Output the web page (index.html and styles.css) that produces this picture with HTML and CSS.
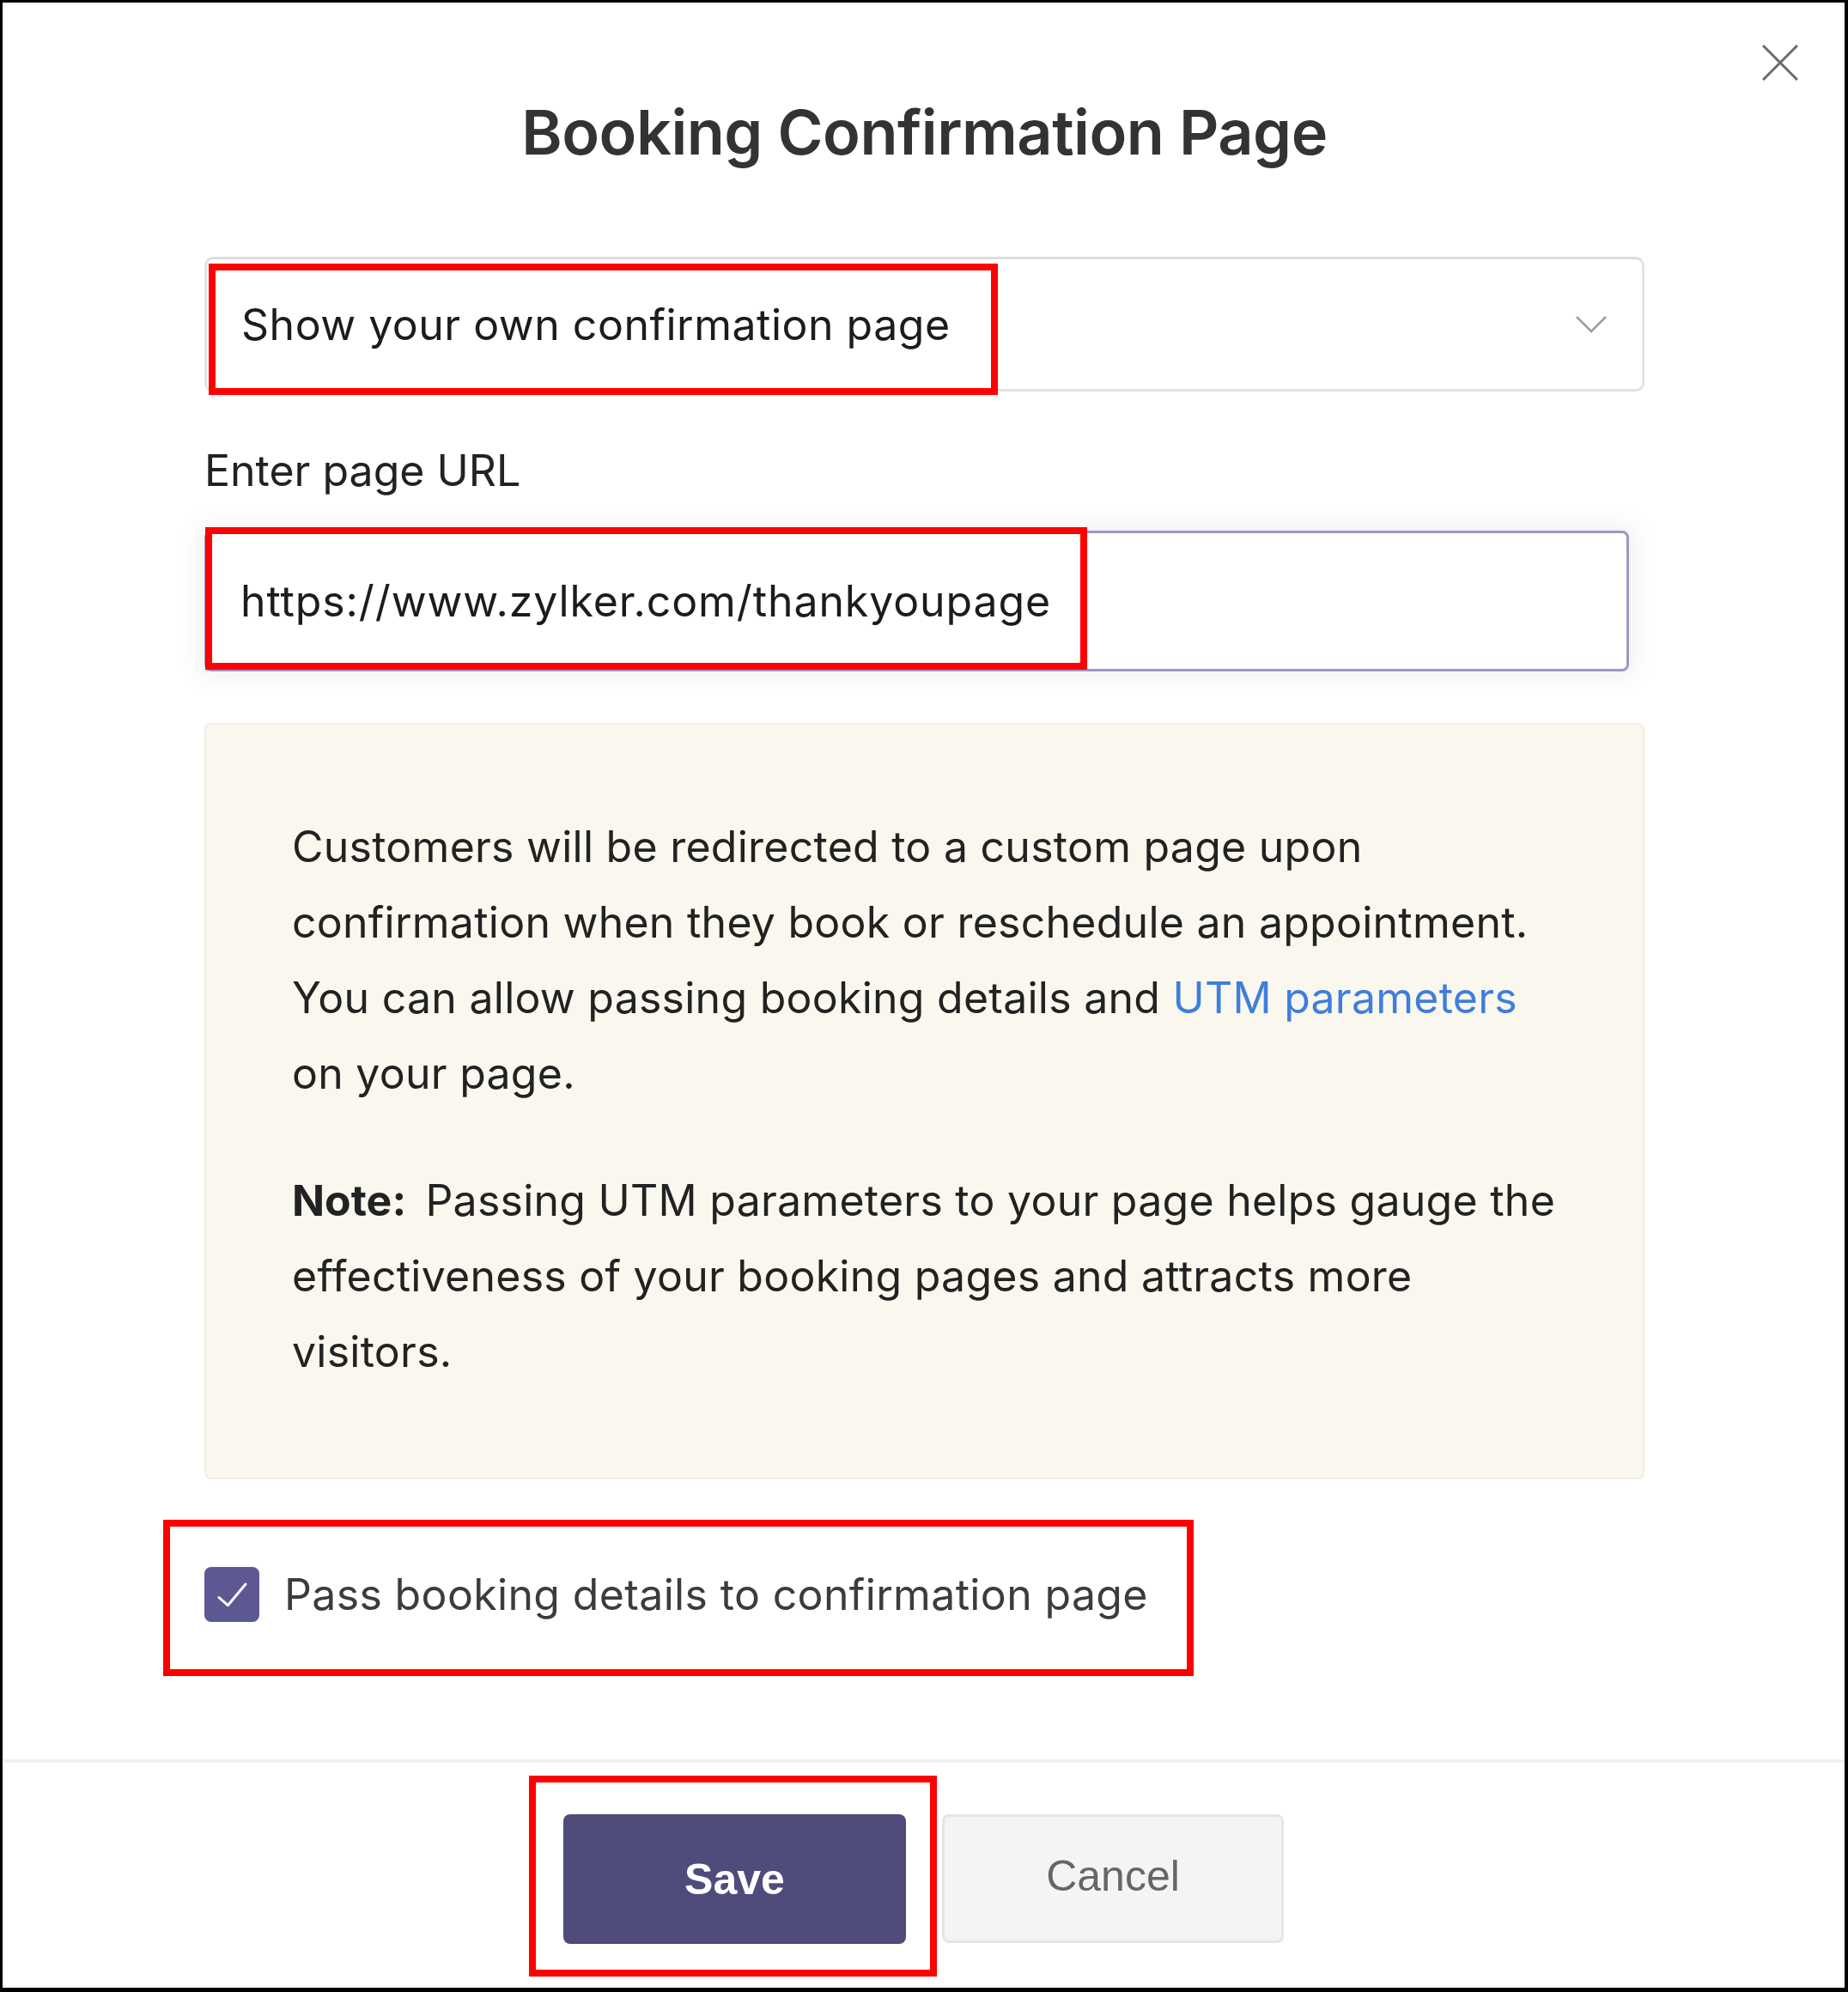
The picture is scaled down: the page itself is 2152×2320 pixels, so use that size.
FILE: index.html
```html
<!DOCTYPE html>
<html lang="en">
<head>
<meta charset="utf-8">
<title>Booking Confirmation Page</title>
<link rel="stylesheet" href="styles.css">
</head>
<body>
<div class="dialog">
  <button class="close" aria-label="Close">
    <svg width="42" height="42" viewBox="0 0 42 42"><path d="M1 1L41 41M41 1L1 41" stroke="#6b6b6b" stroke-width="3" fill="none"/></svg>
  </button>
  <div class="content">
    <h1 class="title">Booking Confirmation Page</h1>
    <div class="select">
      <span>Show your own confirmation page</span>
      <svg class="chev" width="36" height="20" viewBox="0 0 36 20"><path d="M1 1L18 18L35 1" stroke="#9c9c9c" stroke-width="2.5" fill="none"/></svg>
    </div>
    <div class="label">Enter page URL</div>
    <div class="input">https://www.zylker.com/thankyoupage</div>
    <div class="info">
      <p>Customers will be redirected to a custom page upon<br>confirmation when they book or reschedule an appointment.<br>You can allow passing booking details and <a class="link" href="#">UTM parameters</a><br>on your page.</p>
      <p><b class="note">Note:</b> Passing UTM parameters to your page helps gauge the<br>effectiveness of your booking pages and attracts more<br>visitors.</p>
    </div>
    <div class="check-row">
      <span class="checkbox">
        <svg width="64" height="64" viewBox="0 0 64 64"><path d="M17 35.5L27.3 44.7L48 20" stroke="#ffffff" stroke-width="3" fill="none" stroke-linecap="round" stroke-linejoin="round"/></svg>
      </span>
      <span class="check-label">Pass booking details to confirmation page</span>
    </div>
  </div>
  <div class="footer">
    <button class="btn btn-save">Save</button>
    <button class="btn btn-cancel">Cancel</button>
  </div>
  <div class="mark mark-select"></div>
  <div class="mark mark-url"></div>
  <div class="mark mark-check"></div>
  <div class="mark mark-save"></div>
</div>
</body>
</html>
```

FILE: styles.css
```css
html {
  background: #000000;
}
body {
  margin: 0;
  background: #000000;
  font-family: "Inter", "Lato", "Liberation Sans", sans-serif;
}
.dialog {
  position: relative;
  margin: 3px 4px 0 3px;
  height: 2312px;
  background: #ffffff;
  box-sizing: border-box;
  display: flex;
  flex-direction: column;
}
.close {
  position: absolute;
  top: 49px;
  right: 54px;
  padding: 0;
  border: 0;
  background: transparent;
  width: 42px;
  height: 42px;
  display: block;
}
.close svg {
  display: block;
}
.content {
  padding: 108px 233px 0 235px;
}
.title {
  margin: 0;
  font-size: 72px;
  line-height: 86px;
  font-weight: 600;
  color: #333333;
  text-align: center;
  letter-spacing: -0.5px;
}
.select {
  margin-top: 102px;
  height: 157px;
  box-sizing: border-box;
  border: 3px solid #e3e3e3;
  border-top-color: #dcdcdc;
  border-radius: 10px;
  padding: 0 41px 0 40px;
  display: flex;
  align-items: center;
  justify-content: space-between;
  font-size: 50px;
  line-height: 60px;
  color: #1c1c1c;
  letter-spacing: 0.5px;
}
.chev {
  display: block;
}
.label {
  margin-top: 62px;
  font-size: 50px;
  line-height: 60px;
  color: #222222;
}
.input {
  margin-top: 40px;
  width: 1659px;
  height: 164px;
  box-sizing: border-box;
  border: 3px solid #9a98c6;
  border-radius: 8px;
  padding-left: 39px;
  display: flex;
  align-items: center;
  font-size: 50px;
  line-height: 60px;
  color: #1c1c1c;
  letter-spacing: 0.9px;
  box-shadow: 0 0 26px 6px rgba(110, 110, 160, 0.10);
}
.info {
  margin-top: 60px;
  border: 2px solid #f1eedf;
  background: #faf8ee;
  border-radius: 8px;
  padding: 98px 60px 103px 100px;
  font-size: 50px;
  line-height: 88px;
  color: #222222;
  white-space: nowrap;
  letter-spacing: 0.25px;
}
.info p {
  margin: 0;
}
.info p + p {
  margin-top: 60px;
}
.note {
  font-weight: 700;
  margin-right: 8px;
  letter-spacing: 0;
}
.link {
  color: #3f7ddf;
  text-decoration: none;
}
.check-row {
  margin-top: 102px;
  display: flex;
  align-items: center;
  gap: 29px;
}
.checkbox {
  width: 64px;
  height: 64px;
  border-radius: 8px;
  background: #5c5992;
  display: block;
  flex: none;
}
.checkbox svg {
  display: block;
}
.check-label {
  font-size: 50px;
  line-height: 60px;
  color: #3c3c3c;
  letter-spacing: 0.35px;
}
.footer {
  margin-top: 160px;
  border-top: 4px solid #efefef;
  padding-top: 60px;
  display: flex;
  justify-content: center;
  align-items: flex-start;
  gap: 42px;
}
.btn {
  font-family: "Liberation Sans", Arial, sans-serif;
  font-size: 50px;
  line-height: 60px;
  border-radius: 8px;
  padding: 0;
  box-sizing: border-box;
  cursor: pointer;
}
.btn-save {
  width: 399px;
  height: 151px;
  border: 0;
  background: #4f4b7b;
  color: #ffffff;
  font-weight: 700;
}
.btn-cancel {
  width: 398px;
  height: 150px;
  border: 3px solid #e6e6e6;
  background: #f4f4f4;
  color: #666666;
  padding-bottom: 6px;
}
.mark {
  position: absolute;
  border: 8px solid #ff0000;
  box-sizing: border-box;
  pointer-events: none;
}
.mark-select {
  left: 240px;
  top: 304px;
  width: 919px;
  height: 153px;
}
.mark-url {
  left: 236px;
  top: 611px;
  width: 1027px;
  height: 166px;
}
.mark-check {
  left: 187px;
  top: 1767px;
  width: 1200px;
  height: 182px;
}
.mark-save {
  left: 613px;
  top: 2065px;
  width: 475px;
  height: 234px;
}
```
